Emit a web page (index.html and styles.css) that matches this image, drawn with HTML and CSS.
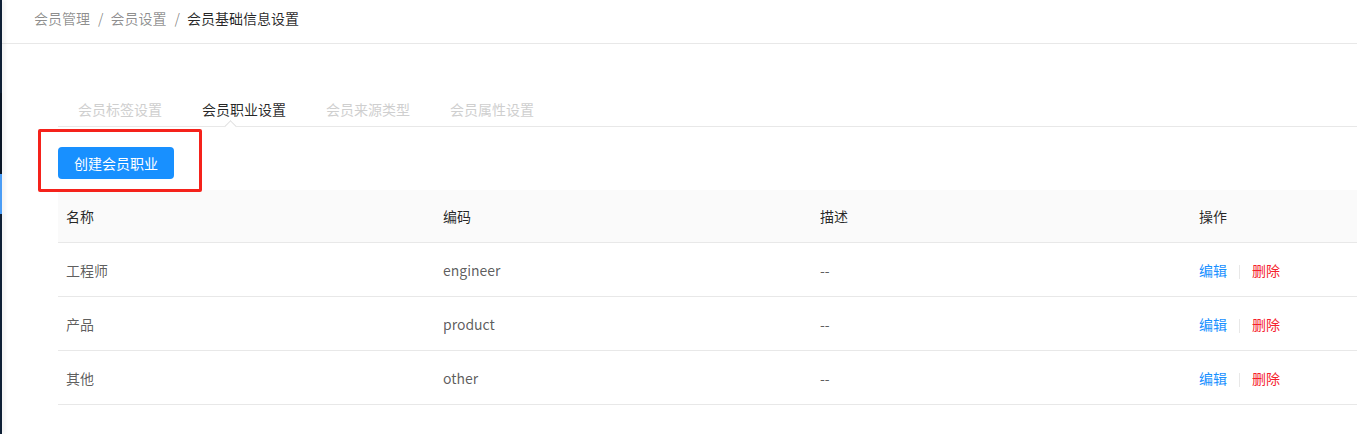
FILE: index.html
```html
<!DOCTYPE html>
<html>
<head>
    <meta charset="utf-8">
    <link rel="stylesheet" href="styles.css">
</head>
<body>
    <div class="layout">
        <aside class="sider">
            <div class="sider-dark"></div>
            <div class="sider-active"></div>
        </aside>

        <main class="main">
            <div class="breadcrumb">
                <span class="crumb">会员管理</span>
                <span class="sep">/</span>
                <span class="crumb">会员设置</span>
                <span class="sep">/</span>
                <span class="crumb current">会员基础信息设置</span>
            </div>

            <div class="content">
                <div class="tabs">
                    <div class="tab">会员标签设置</div>
                    <div class="tab active">会员职业设置<span class="caret"></span></div>
                    <div class="tab">会员来源类型</div>
                    <div class="tab">会员属性设置</div>
                </div>

                <div class="toolbar">
                    <button class="btn-primary">创建会员职业</button>
                    <div class="mark"></div>
                </div>

                <table class="grid">
                    <colgroup>
                        <col class="col-name">
                        <col class="col-code">
                        <col class="col-desc">
                        <col>
                    </colgroup>
                    <thead>
                        <tr>
                            <th>名称</th>
                            <th>编码</th>
                            <th>描述</th>
                            <th>操作</th>
                        </tr>
                    </thead>
                    <tbody>
                        <tr>
                            <td>工程师</td>
                            <td>engineer</td>
                            <td>--</td>
                            <td><a class="link-edit">编辑</a><span class="divider"></span><a class="link-del">删除</a></td>
                        </tr>
                        <tr>
                            <td>产品</td>
                            <td>product</td>
                            <td>--</td>
                            <td><a class="link-edit">编辑</a><span class="divider"></span><a class="link-del">删除</a></td>
                        </tr>
                        <tr>
                            <td>其他</td>
                            <td>other</td>
                            <td>--</td>
                            <td><a class="link-edit">编辑</a><span class="divider"></span><a class="link-del">删除</a></td>
                        </tr>
                    </tbody>
                </table>
            </div>
        </main>
    </div>
</body>
</html>
```

FILE: styles.css
```css
body {
    margin: 0;
    font-family: "Noto Sans CJK SC", "Noto Sans", sans-serif;
    font-size: 14px;
    color: rgba(0, 0, 0, 0.65);
    background: #fff;
}

.layout {
    display: flex;
    min-height: 434px;
}

.sider {
    width: 2px;
    flex-shrink: 0;
    background: #0f2036;
    box-shadow: 2px 0 4px rgba(0, 0, 0, 0.12);
    position: relative;
    z-index: 1;
    padding-top: 93px;
}

.sider-dark {
    height: 81px;
    background: #0a1626;
}

.sider-active {
    height: 40px;
    background: #4a9cf5;
}

.main {
    flex: 1;
    min-width: 0;
}

.breadcrumb {
    display: flex;
    height: 44px;
    box-sizing: border-box;
    padding: 8px 0 0 32px;
    border-bottom: 1px solid #e8e8e8;
    line-height: 20px;
    color: rgba(0, 0, 0, 0.45);
}

.sep {
    margin: 0 7px 0 8px;
}

.crumb.current {
    color: rgba(0, 0, 0, 0.85);
}

.content {
    padding: 35px 0 0 56px;
}

.tabs {
    display: flex;
    border-bottom: 1px solid #e8e8e8;
}

.tab {
    position: relative;
    padding: 19px 20px 6px;
    line-height: 22px;
    color: #cfcfcf;
}

.tab.active {
    color: rgba(0, 0, 0, 0.85);
}

.caret {
    position: absolute;
    left: 44px;
    bottom: -5px;
    width: 8px;
    height: 8px;
    background: #fff;
    border-top: 1px solid #e0e0e0;
    border-left: 1px solid #e0e0e0;
    transform: rotate(45deg);
}

.toolbar {
    position: relative;
    padding: 20px 0 11px;
}

.btn-primary {
    height: 32px;
    padding: 0 16px;
    border: none;
    border-radius: 4px;
    background: #1890ff;
    color: #fff;
    font-family: inherit;
    font-size: 14px;
}

.mark {
    position: absolute;
    left: -20px;
    top: 2px;
    width: 158px;
    height: 57px;
    border: 3px solid #f5221b;
    border-radius: 2px;
}

.grid {
    width: 100%;
    border-collapse: collapse;
    table-layout: fixed;
}

.col-name,
.col-code {
    width: 377px;
}

.col-desc {
    width: 379px;
}

.grid th,
.grid td {
    text-align: left;
    padding: 0 8px;
    border-bottom: 1px solid #e8e8e8;
    font-weight: normal;
}

.grid th {
    height: 52px;
    background: #fafafa;
    color: rgba(0, 0, 0, 0.85);
}

.grid td {
    height: 53px;
}

.link-edit {
    color: #1890ff;
}

.link-del {
    color: #f5222d;
}

.divider {
    display: inline-block;
    width: 1px;
    height: 14px;
    margin: 0 12px;
    background: #e8e8e8;
    vertical-align: middle;
}
```
